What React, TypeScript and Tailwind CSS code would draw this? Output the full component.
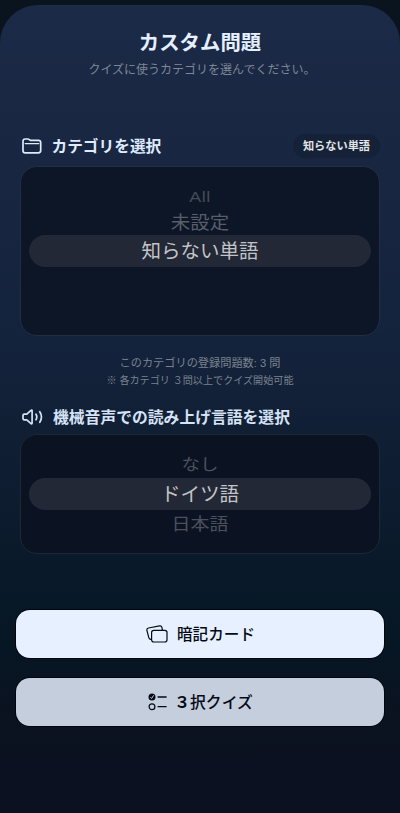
import { ReactNode } from "react";

type PickerItem = {
  label: string;
  className: string;
};

const categories: PickerItem[] = [
  {
    label: "All",
    className: "h-[21px] text-[18px] tracking-[0.5px] scale-y-[0.8] text-[#444b58]",
  },
  {
    label: "未設定",
    className: "h-[27px] pt-[2px] text-[19.5px] scale-y-[0.95] text-[#585e69]",
  },
];

const FolderIcon = () => (
  <svg width="20" height="16" viewBox="0 0 20 16" fill="none" stroke="currentColor" strokeWidth="1.7">
    <path d="M1 3.2C1 1.800 1.800 1 3.200 1h2.500c.8 0 1.200.2 1.700.6l.5.4c.4.3.7.4 1.200.4h7.300c1.500 0 2.300.8 2.300 2.200v8c0 1.500-.8 2.300-2.300 2.300H3.300C1.800 14.900 1 14.100 1 12.700Z" />
    <path d="M3.200 5.600h13.600" strokeWidth="1.300" strokeLinecap="round" />
  </svg>
);

const SpeakerIcon = () => (
  <svg
    width="22"
    height="18"
    viewBox="0 0 22 18"
    fill="none"
    stroke="currentColor"
    strokeWidth="1.7"
    strokeLinecap="round"
    strokeLinejoin="round"
  >
    <path d="M1 7.400c0-.8.4-1.200 1.200-1.200h2.600L9 2.300c.5-.4 1.100-.2 1.100.4v12.600c0 .6-.6.8-1.100.4l-4.200-3.900H2.200c-.8 0-1.200-.4-1.200-1.200Z" />
    <path d="M14 6.200c1 1.700 1 3.900 0 5.600M17.800 3.700c2 3.200 2 7.400 0 10.600" />
  </svg>
);

const CardsIcon = () => (
  <svg width="22" height="18" viewBox="0 0 22 18" fill="none" stroke="currentColor" strokeWidth="1.2">
    <rect x="5.600" y="5.400" width="15.400" height="11.600" rx="2.200" />
    <path d="M5.600 14.400l-1-.1c-1-.1-1.600-.6-1.800-1.600L.9 5.300C.7 4 1.300 3.200 2.500 3L13.600.9c1.300-.2 2 .3 2.300 1.500l.6 3" />
  </svg>
);

const ChecklistIcon = () => (
  <svg width="19" height="18" viewBox="0 0 19 18" fill="none" stroke="currentColor" strokeWidth="1.2">
    <circle cx="4" cy="4" r="3.500" fill="currentColor" stroke="none" />
    <path d="M2.400 4.200l1.200 1.300 2.100-3.200" stroke="#c5cedd" strokeWidth="1" />
    <circle cx="4" cy="13.700" r="2.900" />
    <path d="M9.600 4h9M9.600 13.700h9" strokeWidth="1.300" />
  </svg>
);

const Selection = ({ children }: { children: ReactNode }) => (
  <div className="flex h-8 w-full items-center justify-center rounded-full bg-[#222836] pt-[2px] text-[19.5px] text-[#c3c4c7]">
    {children}
  </div>
);

const App = () => {
  return (
    <div className="h-[813px] w-[400px] overflow-hidden bg-[#0a141f] pt-[5px] font-['Liberation_Sans','Noto_Sans_CJK_JP',sans-serif]">
      <main className="flex h-[808px] flex-col rounded-t-[38px] border-t border-[#1f2c41] bg-[linear-gradient(180deg,#1b2a46_0%,#182642_20%,#14233c_42%,#101e33_55%,#071827_74%,#071624_80%,#0b1220_88%,#0b1120_100%)]">
        <header className="flex flex-col items-center pt-[22px]">
          <h1 className="h-[30px] text-[20.4px] leading-[30px] font-bold text-[#e4efff]">
            カスタム問題
          </h1>
          <p className="mt-[3px] ml-1 h-[18px] text-[12px] leading-[18px] whitespace-nowrap text-[#7f8796]">
            クイズに使うカテゴリを選んでください。
          </p>
        </header>

        {/* Category */}
        <section className="mt-[55px] px-5">
          <div className="flex h-6 items-center text-[#dfeafc]">
            <span className="ml-[1.5px] flex w-[30px]">
              <FolderIcon />
            </span>
            <h2 className="pt-[2px] text-[15.7px] font-bold">カテゴリを選択</h2>
            <span className="ml-auto flex h-6 w-[87px] items-center justify-center rounded-full bg-[#142136] pt-px text-[11.2px] font-bold text-[#e3e4e6]">
              知らない単語
            </span>
          </div>
          <div className="mt-[8px] flex h-[170px] flex-col items-center rounded-[17px] border border-[#222d3f] bg-[#0d1626] px-2 pt-5">
            {categories.map((item) => (
              <div
                key={item.label}
                className={`flex items-center justify-center ${item.className}`}
              >
                {item.label}
              </div>
            ))}
            <Selection>知らない単語</Selection>
          </div>
        </section>

        <div className="mt-[18px] flex flex-col items-center text-[#7b828e]">
          <p className="h-[18px] text-[11.2px] leading-[18px]">
            このカテゴリの登録問題数: 3 問
          </p>
          <p className="h-[18px] text-[10.1px] leading-[18px]">
            ※ 各カテゴリ ３問以上でクイズ開始可能
          </p>
        </div>

        {/* Reading language */}
        <section className="mt-[15px] px-5">
          <div className="flex h-6 items-center text-[#d6e2f5]">
            <span className="ml-[2px] flex w-[31px]">
              <SpeakerIcon />
            </span>
            <h2 className="pt-[2px] text-[15.8px] font-bold whitespace-nowrap">
              機械音声での読み上げ言語を選択
            </h2>
          </div>
          <div className="mt-[5px] flex h-[120px] flex-col items-center rounded-[17px] border border-[#1c2737] bg-[#0b1322] px-2 pt-[15px]">
            <div className="flex h-[28px] scale-y-[0.88] items-center pt-[2px] text-[18.5px] text-[#4b515c]">
              なし
            </div>
            <Selection>ドイツ語</Selection>
            <div className="flex h-[28px] scale-y-[0.88] items-center pt-[2px] text-[19px] text-[#4b515c]">
              日本語
            </div>
          </div>
        </section>

        <div className="mt-[56px] flex flex-col gap-5 px-4 font-medium text-[#050a14]">
          <button className="flex h-12 w-full items-center justify-center rounded-[14px] bg-[#e6f0ff] pl-px text-[15.6px] shadow-[0_0_0_1px_#02060c]">
            <CardsIcon />
            <span className="ml-[9px] pt-[2px]">暗記カード</span>
          </button>
          <button className="flex h-12 w-full items-center justify-center rounded-[14px] bg-[#c5cedd] pl-px text-[15.8px] shadow-[0_0_0_1px_#02060c]">
            <ChecklistIcon />
            <span className="ml-[7px] pt-[2px]">
              <span className="font-bold">３</span>択クイズ
            </span>
          </button>
        </div>
      </main>
    </div>
  );
};

export default App;
